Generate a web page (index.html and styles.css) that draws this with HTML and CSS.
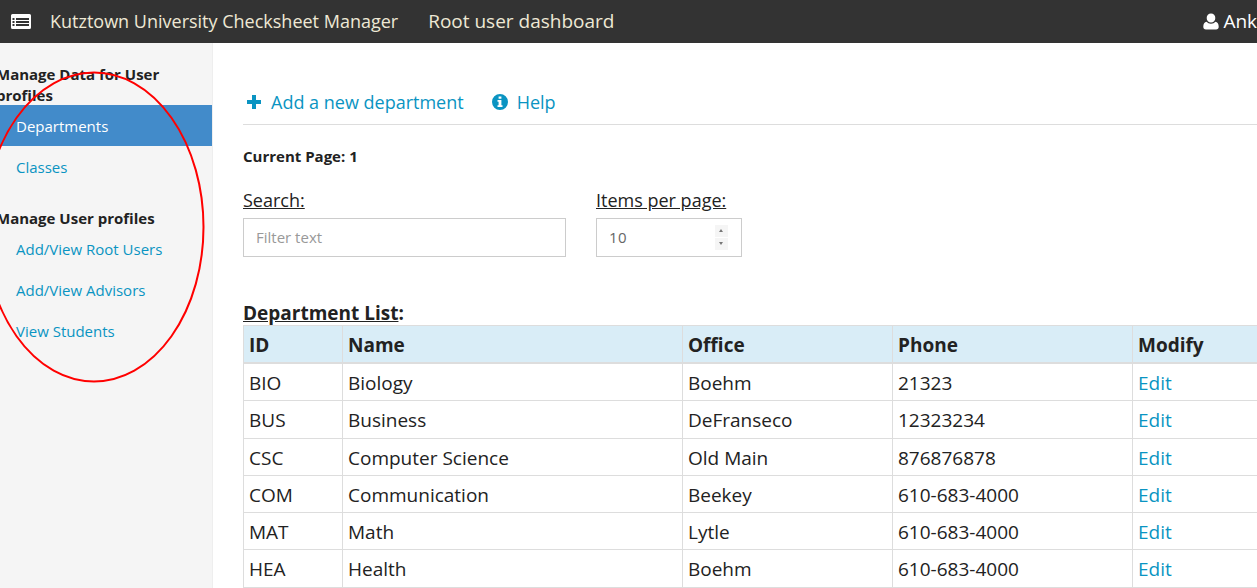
FILE: index.html
```html
<!DOCTYPE html>
<html lang="en">
<head>
<meta charset="utf-8">
<title>Root user dashboard</title>
<link rel="stylesheet" href="styles.css">
</head>
<body>
<header class="navbar">
  <svg class="nav-icon" width="20" height="15" viewBox="0 0 20 15"><path fill="#fff" fill-rule="evenodd" d="M1.500 0h17A1.500 1.500 0 0 1 20 1.500v12a1.500 1.500 0 0 1-1.500 1.500h-17A1.500 1.500 0 0 1 0 13.500v-12A1.500 1.500 0 0 1 1.500 0zM1.500 4v2h2V4zM5 4v2h13V4zM1.500 7v2h2V7zM5 7v2h13V7zM1.500 10v2h2v-2zM5 10v2h13v-2z"/></svg>
  <a class="brand">Kutztown University Checksheet Manager</a>
  <a class="brand page-name">Root user dashboard</a>
  <span class="user">
    <svg class="user-icon" width="16" height="17" viewBox="0 0 16 17"><path fill="#fff" d="M8 0.500a4.300 4.300 0 0 1 4.300 4.500A4.300 4.300 0 0 1 8 9.500 4.300 4.300 0 0 1 3.700 5 4.300 4.300 0 0 1 8 .5zM3.600 8.800C4.600 10 6.200 10.700 8 10.700s3.400-.7 4.400-1.900c2.100.3 3.300 2 3.300 5 0 1.800-1 2.800-2.600 2.800H2.900C1.300 16.600.3 15.600.3 13.800c0-3 1.200-4.700 3.300-5z"/></svg>Ankit
  </span>
</header>
<div class="layout">
  <aside class="sidebar">
    <h4 class="side-heading">Manage Data for User profiles</h4>
    <ul class="side-list">
      <li><a class="side-link active">Departments</a></li>
      <li><a class="side-link">Classes</a></li>
    </ul>
    <h4 class="side-heading second">Manage User profiles</h4>
    <ul class="side-list">
      <li><a class="side-link">Add/View Root Users</a></li>
      <li><a class="side-link">Add/View Advisors</a></li>
      <li><a class="side-link">View Students</a></li>
    </ul>
  </aside>
  <main class="content">
    <nav class="actions">
      <a class="action">
        <svg class="action-icon plus" width="14" height="14" viewBox="0 0 14 14"><path fill="#0a94c2" d="M5 0h4v5h5v4H9v5H5V9H0V5h5z"/></svg>Add a new department
      </a>
      <a class="action">
        <svg class="action-icon" width="16" height="16" viewBox="0 0 16 16"><path fill="#0a94c2" fill-rule="evenodd" d="M8 0a8 8 0 1 1 0 16A8 8 0 0 1 8 0zM6.600 2.400v2.300h2.800V2.400zM5.500 6.100v1.600h1.100v3.500H5.500v1.700h5v-1.700H9.400V6.100z"/></svg>Help
      </a>
    </nav>
    <p class="current-page">Current Page: 1</p>
    <div class="filters">
      <div class="field">
        <label class="field-label" for="search">Search:</label>
        <input class="field-input search" id="search" type="text" placeholder="Filter text">
      </div>
      <div class="field">
        <label class="field-label" for="per-page">Items per page:</label>
        <div class="field-input per-page">
          <span id="per-page">10</span>
          <span class="spinner"><i class="spin up"></i><i class="spin down"></i></span>
        </div>
      </div>
    </div>
    <h3 class="list-title"><span class="underlined">Department List</span>:</h3>
    <table class="dept-table">
      <colgroup>
        <col class="c-id"><col class="c-name"><col class="c-office"><col class="c-phone"><col class="c-mod">
      </colgroup>
      <thead>
        <tr><th>ID</th><th>Name</th><th>Office</th><th>Phone</th><th>Modify</th></tr>
      </thead>
      <tbody>
        <tr><td>BIO</td><td>Biology</td><td>Boehm</td><td>21323</td><td><a class="edit">Edit</a></td></tr>
        <tr><td>BUS</td><td>Business</td><td>DeFranseco</td><td>12323234</td><td><a class="edit">Edit</a></td></tr>
        <tr><td>CSC</td><td>Computer Science</td><td>Old Main</td><td>876876878</td><td><a class="edit">Edit</a></td></tr>
        <tr><td>COM</td><td>Communication</td><td>Beekey</td><td>610-683-4000</td><td><a class="edit">Edit</a></td></tr>
        <tr><td>MAT</td><td>Math</td><td>Lytle</td><td>610-683-4000</td><td><a class="edit">Edit</a></td></tr>
        <tr><td>HEA</td><td>Health</td><td>Boehm</td><td>610-683-4000</td><td><a class="edit">Edit</a></td></tr>
      </tbody>
    </table>
  </main>
</div>
<svg class="annotation" width="240" height="330" viewBox="0 0 240 330"><ellipse cx="110" cy="160" rx="109.500" ry="154.500" fill="none" stroke="#f00" stroke-width="2"/></svg>
</body>
</html>
```
FILE: styles.css
```css
* { box-sizing: border-box; }
html, body { height: 100%; }
body {
  margin: 0;
  overflow: hidden;
  font-family: "Open Sans", sans-serif;
  font-size: 15px;
  color: #222;
  background: #fff;
}
a { color: #0a94c2; }
.navbar {
  display: flex;
  align-items: center;
  height: 43px;
  width: 1300px;
  padding-bottom: 1px;
  background: #333;
  color: #fff;
}
.nav-icon { margin-left: 11px; flex: none; }
.brand { margin-left: 19px; font-size: 18px; color: #eee8d5; white-space: nowrap; }
.page-name { margin-left: 30px; font-size: 19px; }
.user { margin-left: 589px; display: flex; align-items: center; font-size: 19px; color: #fff; white-space: nowrap; }
.user-icon { margin-right: 4px; }
.layout { display: flex; width: 1300px; height: 545px; }
.sidebar {
  flex: none;
  width: 213px;
  height: 100%;
  background: #f5f5f5;
  border-right: 1px solid #eee;
  padding-top: 21px;
}
.side-heading {
  margin: 0 0 -1px -4px;
  font-size: 15px;
  line-height: 21px;
  font-weight: 700;
  color: #222;
  width: 190px;
}
.side-heading.second { margin-top: 21px; }
.side-list { list-style: none; margin: 0; padding: 0; }
.side-link {
  display: block;
  height: 41px;
  line-height: 43px;
  padding-left: 16px;
  width: 212px;
}
.side-link.active { background: #428bca; color: #fff; }
.content { flex: 1; padding: 42px 0 0 30px; }
.actions {
  display: flex;
  gap: 28px;
  height: 40px;
  width: 1100px;
  padding-top: 4px;
  border-bottom: 1px solid #ddd;
  font-size: 18px;
  line-height: 26px;
}
.action { display: flex; align-items: center; height: 26px; white-space: nowrap; }
.action-icon { margin-right: 9px; flex: none; }
.action-icon.plus { margin-left: 4px; margin-right: 10px; }
.current-page { margin: 21px 0 0; font-size: 15px; line-height: 21px; font-weight: 700; }
.filters { display: flex; gap: 30px; margin-top: 20px; }
.field { display: flex; flex-direction: column; }
.field-label { font-size: 18px; line-height: 26px; text-decoration: underline; height: 26px; white-space: nowrap; }
.field-input {
  height: 39px;
  margin-top: 5px;
  border: 1px solid #ccc;
  background: #fff;
  font-family: inherit;
  font-size: 15px;
  color: #555;
}
.search { width: 323px; padding: 0 12px 2px; border-radius: 0; outline: 0; }
.search::placeholder { color: #999; opacity: 1; }
.per-page { width: 146px; display: flex; align-items: center; justify-content: space-between; padding: 0 13px 0 12px; }
#per-page { margin-bottom: 2px; letter-spacing: .5px; color: #666; }
.spinner { display: flex; flex-direction: column; width: 13px; height: 25px; gap: 1px; }
.spin { flex: 1; background: #f5f5f5; position: relative; display: block; }
.spin::after { content: ""; position: absolute; left: 4px; border-left: 2.500px solid transparent; border-right: 2.500px solid transparent; }
.spin.up::after { top: 4px; border-bottom: 3px solid #777; }
.spin.down::after { top: 4px; border-top: 3px solid #777; }
.list-title { margin: 43px 0 0; font-size: 19px; line-height: 26px; height: 26px; font-weight: 700; color: #222; }
.underlined { text-decoration: underline; }
.dept-table { border-collapse: collapse; table-layout: fixed; width: 1100px; font-size: 19px; margin-top: -1px; }
.c-id { width: 99px; }
.c-name { width: 340px; }
.c-office { width: 210px; }
.c-phone { width: 240px; }
.c-mod { width: 211px; }
.dept-table th, .dept-table td {
  border: 1px solid #ddd;
  padding: 6px 5px 4px;
  line-height: 26.250px;
  text-align: left;
}
.dept-table th { background: #d9edf7; border-bottom-width: 2px; font-weight: 700; padding-bottom: 3.850px; }
.edit { color: #0a94c2; }
.annotation { position: absolute; left: -16px; top: 67px; pointer-events: none; }
```
